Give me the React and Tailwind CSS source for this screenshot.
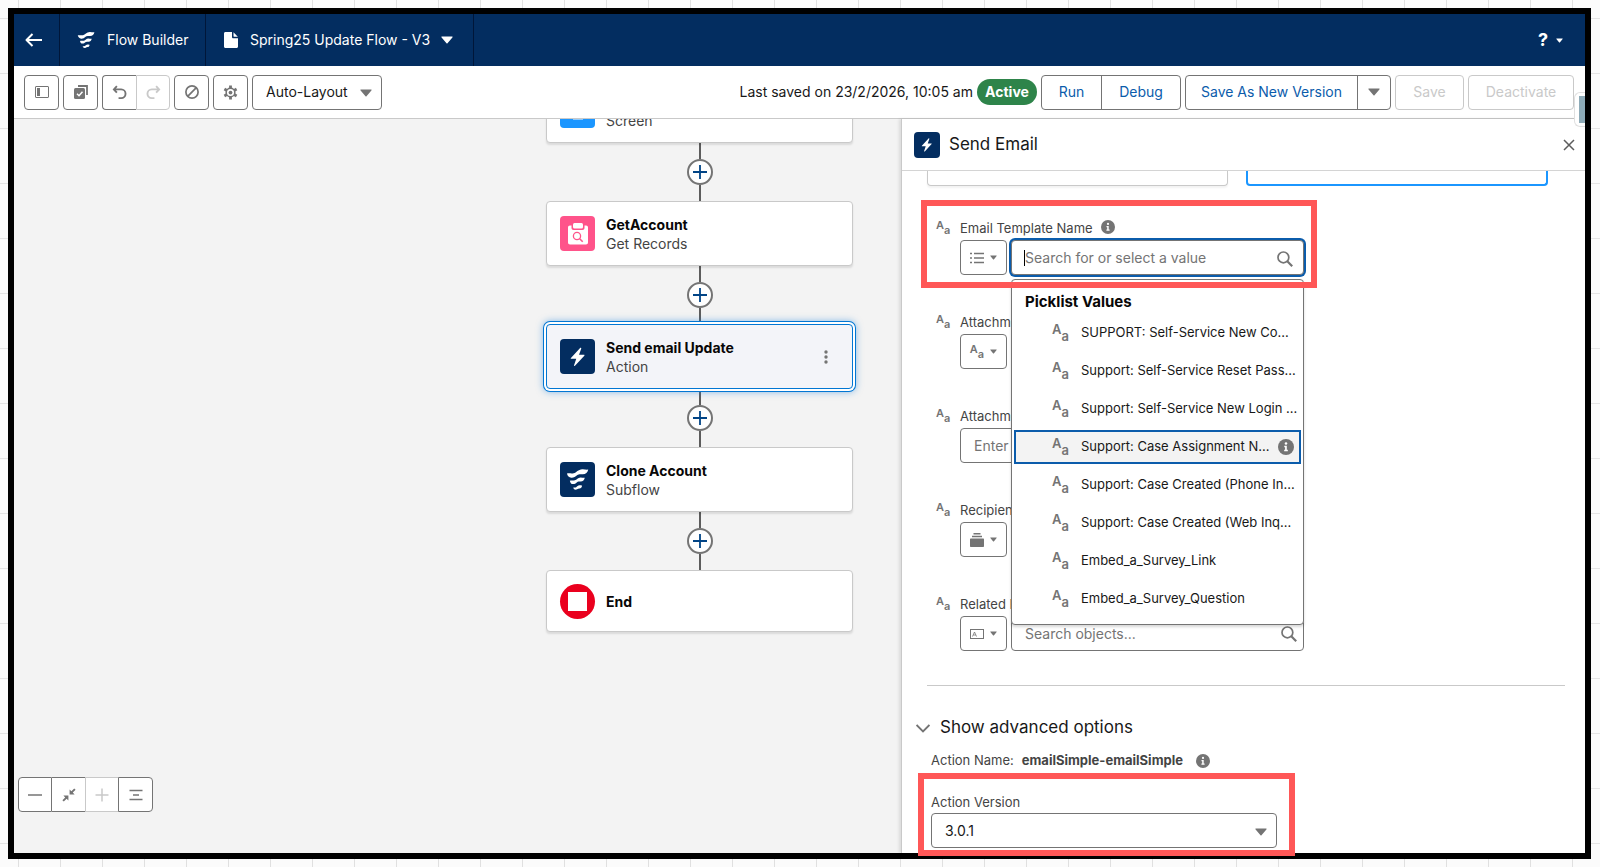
import React, { useState } from "react";
import clsx from "clsx";

/* ---------- Icons ---------- */

const Caret = ({ className }) => (
  <svg viewBox="0 0 12 8" className={className} fill="currentColor" aria-hidden="true">
    <path d="M1 0.500h10c.6 0 .8.6.4 1L6.500 7.300a.7.7 0 0 1-1 0L.6 1.500C.2 1.100.4.5 1 .5z" />
  </svg>
);

const FlowIcon = ({ className }) => (
  <svg viewBox="0 0 24 24" className={className} fill="currentColor" aria-hidden="true">
    <path d="M1 5.800c2.500-.6 4.300.2 7-.3C11 4.800 12.500 1.600 17 1.300c2.400-.1 4.200.7 6.200.3-.5 3-2.700 4.900-5.700 5-2.600.1-4-.4-6 1C9.500 9.200 8 10.400 5.500 10.200 3.200 10 1.500 8.300 1 5.800z" />
    <path d="M4 13.200c2-.4 3.300.2 5.200-.3 2.200-.6 3-2.900 6-3 1.600 0 2.900.6 4.400.3-.4 2.500-2 3.900-4.200 4-1.800.1-2.700-.2-4.200.9-1.300 1-2.300 1.800-4 1.700-1.700-.1-2.900-1.600-3.200-3.600z" />
    <path d="M7.600 20.400c1.200-.3 2 0 3-.4 1.200-.5 1.700-1.900 3.500-1.900 1.100 0 1.800.4 2.700.2-.2 1.900-1.300 3-2.700 3.100-1.100.1-1.700.4-2.500.9-1.700.9-3.700.200-4-1.900z" />
  </svg>
);

const BoltIcon = ({ className }) => (
  <svg viewBox="0 0 24 24" className={className} fill="currentColor" aria-hidden="true">
    <path d="M14.300 2.200 4.300 13c-.4.5-.2 1 .4 1h5.400L7.700 21c-.3.9.5 1.200 1 .6l10.200-11c.4-.5.1-1-.4-1h-5.400l2.400-6.700c.3-.9-.6-1.300-1.200-.7z" />
  </svg>
);

const SearchIcon = ({ className }) => (
  <svg viewBox="0 0 16 16" className={className} fill="none" stroke="currentColor" strokeWidth="1.700" aria-hidden="true">
    <circle cx="6.400" cy="6.400" r="5.400" />
    <path d="m10.300 10.300 4.900 4.900" strokeWidth="2.200" />
  </svg>
);

const InfoIcon = ({ className }) => (
  <svg viewBox="0 0 14 14" className={className} aria-hidden="true">
    <circle cx="7" cy="7" r="7" fill="#747474" />
    <circle cx="7" cy="3.900" r="1.100" fill="#fff" />
    <path d="M5.500 6h2.200v3.500h.9v1.200H5.400V9.500h.8V7.200h-.7z" fill="#fff" />
  </svg>
);

const TextType = ({ small }) => (
  <span
    className={clsx(
      "flex shrink-0 font-semibold text-[#747474]",
      small ? "h-[14px] text-[11px]" : "h-4 text-[13px]"
    )}
    aria-hidden="true"
  >
    <span className="self-start leading-[9px]">A</span>
    <span className={clsx("self-end", small ? "leading-[9px]" : "leading-[10px]")}>a</span>
  </span>
);

/* ---------- Header ---------- */

const Header = () => (
  <header className="flex h-[52px] shrink-0 items-stretch bg-[#032d60] text-sm text-white">
    <a href="#back" aria-label="Back" className="flex w-[46px] items-center border-r border-[#001639] pl-[11px]">
      <svg viewBox="0 0 17 14" className="h-[14px] w-[17px]" fill="none" stroke="currentColor" strokeWidth="2">
        <path d="M7.500 1 1.500 7l6 6M1.500 7H17" strokeLinejoin="round" />
      </svg>
    </a>
    <div className="flex items-center border-r border-[#001639] pr-4 pl-[17px]">
      <FlowIcon className="h-[18px] w-[18px]" />
      <span className="w-[94px] pl-3 whitespace-nowrap">Flow Builder</span>
    </div>
    <button className="flex items-center border-r border-[#001639] pr-5 pl-[18px]">
      <svg viewBox="0 0 14 16" className="h-4 w-[14px]" fill="currentColor">
        <path d="M1.500 0H8v5c0 .8.500 1.300 1.300 1.300H14v8.200c0 .8-.6 1.500-1.500 1.500h-11C.6 16 0 15.300 0 14.500v-13C0 .6.6 0 1.500 0z" />
        <path d="M9.500.2 13.800 4.800H10c-.3 0-.5-.2-.5-.5z" />
      </svg>
      <span className="pl-3 whitespace-nowrap">Spring25 Update Flow - V3</span>
      <Caret className="ml-[11px] h-2 w-3" />
    </button>
    <button aria-label="Help" className="ml-auto flex items-center gap-2 pr-[22px] text-lg font-bold">
      ?
      <Caret className="h-[5px] w-[7px]" />
    </button>
  </header>
);

/* ---------- Toolbar ---------- */

const ToolButton = ({ label, className, children, ...rest }) => (
  <button
    aria-label={label}
    className={clsx("flex h-[35px] items-center justify-center border bg-white", className)}
    {...rest}
  >
    {children}
  </button>
);

const enabled = "border-[#747474] text-[#747474]";
const disabledLook = "border-[#c9c9c9] text-[#c9c9c9]";

const UndoIcon = ({ className }) => (
  <svg viewBox="0 0 16 16" className={className} fill="none" stroke="currentColor" strokeWidth="2">
    <path d="M5.200 1.300 2 4.700l3.200 3.400M2.200 4.700h7.600a4.600 4.600 0 0 1 0 9.300H7" />
  </svg>
);

const Toolbar = () => {
  const [layout, setLayout] = useState("auto");

  return (
    <div className="flex h-[53px] shrink-0 items-center border-b border-[#c9c9c9] bg-white pr-[11px] pl-[10px] text-sm">
      <div className="flex gap-1">
        <ToolButton label="Toggle toolbox" className={clsx("w-[35px] rounded", enabled)}>
          <svg viewBox="0 0 14 12" className="h-3 w-[14px]" fill="none" stroke="currentColor">
            <rect x="0.500" y="0.500" width="13" height="11" rx="0.500" />
            <rect x="2" y="2" width="3" height="8" fill="currentColor" stroke="none" />
          </svg>
        </ToolButton>
        <ToolButton label="Select elements" className={clsx("w-[35px] rounded", enabled)}>
          <svg viewBox="0 0 14 14" className="h-[14px] w-[14px]">
            <path d="M4 1h9v9" fill="none" stroke="currentColor" strokeWidth="1.800" />
            <rect x="0" y="3" width="11" height="11" rx="1.500" fill="currentColor" />
            <path d="m3 8.700 2 2 3.500-4" fill="none" stroke="#fff" strokeWidth="1.500" />
          </svg>
        </ToolButton>
        <div className="flex">
          <ToolButton label="Undo" className={clsx("w-[34px] rounded-l border-r-0", enabled)}>
            <UndoIcon className="h-[15px] w-[15px]" />
          </ToolButton>
          <ToolButton label="Redo" disabled className={clsx("w-[34px] rounded-r", disabledLook)}>
            <UndoIcon className="h-[15px] w-[15px] -scale-x-100" />
          </ToolButton>
        </div>
        <ToolButton label="Disable" className={clsx("w-[35px] rounded", enabled)}>
          <svg viewBox="0 0 14 14" className="h-[14px] w-[14px]" fill="none" stroke="currentColor" strokeWidth="1.700">
            <circle cx="7" cy="7" r="6.100" />
            <path d="m2.700 11.300 8.600-8.600" />
          </svg>
        </ToolButton>
        <ToolButton label="Flow settings" className={clsx("w-[35px] rounded", enabled)}>
          <svg viewBox="0 0 16 16" className="h-[15px] w-[15px]" fill="none" stroke="currentColor">
            <path d="M8 .5v3M8 12.500v3M1.500 4.300l2.600 1.500M11.900 10.200l2.600 1.500M1.500 11.700l2.600-1.500M11.900 5.800l2.600-1.500" strokeWidth="3" />
            <circle cx="8" cy="8" r="4.600" strokeWidth="1.600" />
            <circle cx="8" cy="8" r="2" fill="currentColor" stroke="none" />
          </svg>
        </ToolButton>
        <div className="relative">
          <select
            aria-label="Layout mode"
            value={layout}
            onChange={(e) => setLayout(e.target.value)}
            className="h-[35px] w-[130px] appearance-none rounded border border-[#747474] bg-white pl-[13px] text-[#181818]"
          >
            <option value="auto">Auto-Layout</option>
            <option value="free">Free-Form</option>
          </select>
          <Caret className="pointer-events-none absolute top-[14px] right-[10px] h-2 w-3 text-[#747474]" />
        </div>
      </div>

      <div className="ml-auto flex items-center gap-1 text-[#0b5cab]">
        <span className="whitespace-nowrap text-[#181818]">Last saved on 23/2/2026, 10:05 am</span>
        <span className="flex h-[26px] w-[60px] items-center justify-center rounded-full bg-[#2e844a] font-bold text-white">
          Active
        </span>
        <div className="flex h-[35px] rounded border border-[#747474]">
          <button className="w-[60px] border-r border-[#747474]">Run</button>
          <button className="w-[78px]">Debug</button>
        </div>
        <div className="flex h-[35px] rounded border border-[#747474]">
          <button className="w-[172px] border-r border-[#747474] whitespace-nowrap">Save As New Version</button>
          <button aria-label="More save options" className="flex w-8 items-center justify-center text-[#747474]">
            <Caret className="h-2 w-3" />
          </button>
        </div>
        <button disabled className="h-[35px] w-[69px] rounded border border-[#c9c9c9] text-[#c9c9c9]">
          Save
        </button>
        <button disabled className="h-[35px] w-[106px] rounded border border-[#c9c9c9] text-[#c9c9c9]">
          Deactivate
        </button>
      </div>
    </div>
  );
};

/* ---------- Canvas ---------- */

const Node = ({ title, type, icon, selected, end }) => (
  <div
    className={clsx(
      "relative flex w-[307px] items-center rounded border pl-[13px]",
      end ? "h-[62px]" : "h-[65px]",
      selected
        ? "border-[#0176d3] bg-[#f3f4f9] shadow-[0_0_0_2px_#fff,0_0_0_3px_#0176d3,0_0_7px_3px_#1b7fdc80]"
        : "border-[#c9c9c9] bg-white shadow-[0_2px_2px_#0000001a]"
    )}
  >
    {icon}
    <div className="ml-[11px] text-sm leading-[19px] text-[#444]">
      <div className="font-bold text-[#080707]">{title}</div>
      {type && <div>{type}</div>}
    </div>
    {selected && (
      <button aria-label="Element actions" className="mr-6 ml-auto text-[#747474]">
        <svg viewBox="0 0 4 14" className="h-[14px] w-1" fill="currentColor">
          <circle cx="2" cy="2" r="1.700" />
          <circle cx="2" cy="7" r="1.700" />
          <circle cx="2" cy="12" r="1.700" />
        </svg>
      </button>
    )}
  </div>
);

const Connector = () => (
  <div className="flex h-[58px] flex-col items-center">
    <div className="w-[2px] flex-1 bg-[#5c5c5c]" />
    <button
      aria-label="Add element"
      className="flex h-[26px] w-[26px] items-center justify-center rounded-full border-2 border-[#747474] bg-white text-[#014486]"
    >
      <svg viewBox="0 0 14 14" className="h-[14px] w-[14px]" stroke="currentColor" strokeWidth="1.800">
        <path d="M7 0v14M0 7h14" />
      </svg>
    </button>
    <div className="w-[2px] flex-1 bg-[#5c5c5c]" />
  </div>
);

const iconTile = "flex h-[35px] w-[35px] shrink-0 items-center justify-center rounded text-white";

const Canvas = () => (
  <main className="relative min-w-0 flex-1 overflow-hidden bg-[#f3f3f3] pl-[532px]">
    <div className="-mt-[41px] flex w-[307px] flex-col items-center">
      <Node
        title="Welcome"
        type="Screen"
        icon={
          <div className={clsx(iconTile, "bg-[#1b96ff]")}>
            <svg viewBox="0 0 22 22" className="h-[22px] w-[22px]" fill="currentColor">
              <rect x="1" y="1" width="20" height="13" rx="1.500" />
              <path d="M9 14h4v3h3v2.500H6V17h3z" />
            </svg>
          </div>
        }
      />
      <Connector />
      <Node
        title="GetAccount"
        type="Get Records"
        icon={
          <div className={clsx(iconTile, "bg-[#ff538a]")}>
            <svg viewBox="0 0 22 24" className="h-6 w-[22px]" fill="currentColor">
              <rect x="6" y="1" width="10" height="5.500" rx="1.500" />
              <path d="M3 3.500h1.500V6c0 1.300.8 2 2 2h9c1.200 0 2-.7 2-2V3.500H19c1.200 0 2 .8 2 2v15c0 1.200-.8 2-2 2H3c-1.200 0-2-.8-2-2v-15c0-1.200.8-2 2-2z" />
              <circle cx="10" cy="14" r="3.600" fill="none" stroke="#ff538a" strokeWidth="1.300" />
              <path d="m12.700 16.700 3 3" stroke="#ff538a" strokeWidth="1.600" />
            </svg>
          </div>
        }
      />
      <Connector />
      <Node
        selected
        title="Send email Update"
        type="Action"
        icon={
          <div className={clsx(iconTile, "bg-[#032d60]")}>
            <BoltIcon className="h-[22px] w-[22px]" />
          </div>
        }
      />
      <Connector />
      <Node
        title="Clone Account"
        type="Subflow"
        icon={
          <div className={clsx(iconTile, "bg-[#032d60]")}>
            <FlowIcon className="h-[23px] w-[23px]" />
          </div>
        }
      />
      <Connector />
      <Node
        end
        title="End"
        icon={
          <div className="flex h-[35px] w-[35px] shrink-0 items-center justify-center rounded-full bg-[#ea001e]">
            <div className="h-[19px] w-[19px] bg-white" />
          </div>
        }
      />
    </div>

    {/* Zoom controls */}
    <div className="absolute bottom-[41px] left-1 flex">
      <ToolButton label="Zoom out" className={clsx("w-[34px] rounded-l", enabled)}>
        <svg viewBox="0 0 14 14" className="h-[14px] w-[14px]" stroke="currentColor" strokeWidth="1.500">
          <path d="M0 7h14" />
        </svg>
      </ToolButton>
      <ToolButton label="Zoom to fit" className={clsx("w-[33px] border-x-0", enabled)}>
        <svg viewBox="0 0 14 14" className="h-[14px] w-[14px]" fill="currentColor">
          <path d="M7.600 1.400v5h5L10.800 4.600 13.600 1.800 12.200.4 9.400 3.200z" />
          <path d="M6.400 12.600v-5h-5l1.800 1.800L.4 12.200l1.400 1.400 2.800-2.800z" />
        </svg>
      </ToolButton>
      <ToolButton label="Zoom in" disabled className={clsx("w-[33px] border-r-0", disabledLook)}>
        <svg viewBox="0 0 14 14" className="h-[14px] w-[14px]" stroke="currentColor" strokeWidth="1.500">
          <path d="M0.500 7h13M7 .5v13" />
        </svg>
      </ToolButton>
      <ToolButton label="Align" className={clsx("w-[35px] rounded-r", enabled)}>
        <svg viewBox="0 0 14 14" className="h-[14px] w-[14px]" stroke="currentColor" strokeWidth="1.700">
          <path d="M.5 2.500h13M4 7h6M.5 11.500h13" />
        </svg>
      </ToolButton>
    </div>
  </main>
);

/* ---------- Side panel ---------- */

const picklist = [
  "SUPPORT: Self-Service New Co...",
  "Support: Self-Service Reset Pass...",
  "Support: Self-Service New Login ...",
  "Support: Case Assignment N...",
  "Support: Case Created (Phone In...",
  "Support: Case Created (Web Inq...",
  "Embed_a_Survey_Link",
  "Embed_a_Survey_Question",
];

const Field = ({ id, label, info, children }) => (
  <div className="flex">
    <div className="w-6 shrink-0 pt-px">
      <TextType small />
    </div>
    <div className="w-[344px]">
      <label htmlFor={id} className="flex h-4 items-center text-[13px] leading-4 whitespace-nowrap text-[#444]">
        {label}
        {info && <InfoIcon className="mb-[2px] ml-2 h-[14px] w-[14px]" />}
      </label>
      <div className="mt-1 flex gap-1">{children}</div>
    </div>
  </div>
);

const TypeButton = ({ label, children }) => (
  <button
    aria-label={label}
    className="flex h-[35px] w-[47px] shrink-0 items-center justify-center gap-[6px] rounded border border-[#747474] bg-white text-[#747474]"
  >
    {children}
    <Caret className="h-[5px] w-[7px]" />
  </button>
);

const inputClass =
  "h-[35px] w-full min-w-0 rounded border border-[#747474] bg-white pl-[13px] text-sm text-[#181818] placeholder:text-[#747474] outline-none";

const TemplateMenu = () => {
  const [active, setActive] = useState(3);

  return (
    <div className="absolute top-[39px] left-0 z-10 w-full rounded border border-[#747474] bg-white px-[2px] pt-[11px] pb-2 shadow-[0_2px_3px_#00000029]">
      <h3 className="pl-[11px] text-[15px] leading-[22px] font-bold text-[#080707]">Picklist Values</h3>
      <ul role="listbox" aria-label="Picklist Values" className="mt-[3px] flex flex-col gap-1">
        {picklist.map((name, i) => (
          <li
            key={name}
            role="option"
            aria-selected={i === active}
            onMouseEnter={() => setActive(i)}
            className={clsx(
              "flex h-[34px] cursor-pointer items-center border-2 pl-9 text-[13px] whitespace-nowrap text-[#181818]",
              i === active ? "border-[#0b5cab] bg-[#f3f3f3]" : "border-transparent"
            )}
          >
            <TextType />
            <span className="ml-3">{name}</span>
            {i === active && <InfoIcon className="mr-[5px] ml-auto h-4 w-4" />}
          </li>
        ))}
      </ul>
    </div>
  );
};

const Panel = () => {
  const [open, setOpen] = useState(true);

  return (
    <aside className="relative flex w-[684px] shrink-0 flex-col border-l border-[#c9c9c9] bg-white shadow-[-2px_0_3px_#0000001a]">
      <div className="flex h-[52px] shrink-0 items-center border-b border-[#d4d4d4] pr-[10px] pl-3">
        <div className="flex h-[26px] w-[26px] items-center justify-center rounded bg-[#032d60] text-white">
          <BoltIcon className="h-4 w-4" />
        </div>
        <h2 className="ml-[9px] pt-px text-[17px] text-[#181818]">Send Email</h2>
        <button aria-label="Close" className="ml-auto text-[#5c5c5c]">
          <svg viewBox="0 0 12 12" className="h-3 w-3" stroke="currentColor" strokeWidth="1.500">
            <path d="m1 1 10 10M11 1 1 11" />
          </svg>
        </button>
      </div>

      <div className="pl-[25px]">
        {/* Bottom edge of the scrolled option cards */}
        <div className="flex h-[15px] gap-[18px] pr-[37px]">
          <div className="flex-1 rounded-b border border-t-0 border-[#c9c9c9] shadow-[0_2px_2px_#0000000d]" />
          <div className="flex-1 rounded-b border-2 border-t-0 border-[#1b96ff]" />
        </div>

        <div className="mt-[34px] flex flex-col gap-[39px] pl-[9px]">
          <div className="relative">
            <Field id="template" label="Email Template Name" info>
              <TypeButton label="Template type">
                <svg viewBox="0 0 14 12" className="h-3 w-[14px]" stroke="currentColor" strokeWidth="1.700">
                  <path d="M4 1.500h10M4 6h10M4 10.500h10M0 1.500h2M0 6h2M0 10.500h2" />
                </svg>
              </TypeButton>
              <div className="relative flex-1">
                <input
                  id="template"
                  type="text"
                  placeholder="Search for or select a value"
                  className={clsx(inputClass, "ring-2 ring-[#0b5cab]")}
                />
                <span className="absolute top-[10px] left-[13px] h-4 w-px bg-black" />
                <SearchIcon className="absolute top-[11px] right-[11px] h-4 w-4 text-[#747474]" />
                <TemplateMenu />
              </div>
            </Field>
            <div className="pointer-events-none absolute -top-5 -left-[15px] z-20 h-[88px] w-[396px] border-[6px] border-[#ff5757]" />
          </div>

          <Field id="attachment" label="Attachment ID">
            <TypeButton label="Attachment type">
              <TextType small />
            </TypeButton>
            <input id="attachment" type="text" className={inputClass} />
          </Field>

          <Field id="attachment-name" label="Attachment Name">
            <input id="attachment-name" type="text" placeholder="Enter value" className={inputClass} />
          </Field>

          <Field id="recipients" label="Recipient List">
            <TypeButton label="Recipient type">
              <svg viewBox="0 0 14 14" className="h-[14px] w-[14px]" fill="currentColor">
                <path d="M3.500 0h7v1.500h-7zM2 2.800h10v1.500H2z" />
                <path d="M1 5.500h12c.6 0 1 .4 1 1V13c0 .6-.4 1-1 1H1c-.6 0-1-.4-1-1V6.500c0-.6.400-1 1-1z" />
              </svg>
            </TypeButton>
            <input id="recipients" type="text" className={inputClass} />
          </Field>

          <Field id="related" label="Related Record ID">
            <TypeButton label="Record type">
              <svg viewBox="0 0 14 10" className="h-[10px] w-[14px]" fill="none" stroke="currentColor">
                <rect x="0.500" y="0.500" width="13" height="9" />
                <path d="m2.500 7.500 2-4.500 2 4.500M3.300 6h2.400" strokeWidth="0.800" />
              </svg>
            </TypeButton>
            <div className="relative flex-1">
              <input id="related" type="text" placeholder="Search objects..." className={inputClass} />
              <SearchIcon className="absolute top-[10px] right-[7px] h-4 w-4 text-[#747474]" />
            </div>
          </Field>
        </div>

        <hr className="mt-[34px] mr-5 border-[#c9c9c9]" />
      </div>

      {/* ---------- Advanced options ---------- */}
      <div className="px-[14px]">
        <button
          aria-expanded={open}
          onClick={() => setOpen(!open)}
          className="mt-[30px] flex h-6 items-center gap-[10px] text-[17px] text-[#181818]"
        >
          <svg viewBox="0 0 14 9" className="h-[9px] w-[14px] text-[#747474]" fill="none" stroke="currentColor" strokeWidth="1.800">
            <path d="m.6 1 6.400 6.500L13.400 1" />
          </svg>
          Show advanced options
        </button>
        {open && (
          <div className="pl-[15px] text-[13px] text-[#444]">
            <p className="mt-[11px] flex h-5 items-center">
              Action Name:
              <strong className="ml-2">emailSimple-emailSimple</strong>
              <InfoIcon className="ml-[13px] h-[14px] w-[14px]" />
            </p>
            <div className="relative mt-[23px] w-[346px]">
              <label htmlFor="version" className="block leading-4">
                Action Version
              </label>
              <select
                id="version"
                className="mt-[3px] block h-[35px] w-full appearance-none rounded border border-[#747474] bg-white pl-[13px] text-sm text-[#181818]"
              >
                <option>3.0.1</option>
              </select>
              <Caret className="pointer-events-none absolute right-[10px] bottom-3 h-2 w-3 text-[#747474]" />
              <div className="pointer-events-none absolute -top-[21px] -left-[13px] h-[83px] w-[377px] border-[6px] border-[#ff5757]" />
            </div>
          </div>
        )}
      </div>
    </aside>
  );
};

export default function App() {
  return (
    <div className="h-screen bg-[#fbfbfb] bg-[linear-gradient(90deg,#e0e0e0_1px,transparent_1px),linear-gradient(#e4e4e4_1px,transparent_1px)] bg-[size:42px_55px] bg-[position:18px_18px] p-2 pr-[9px] font-[Inter,'Liberation_Sans',sans-serif]">
      <div className="relative flex h-full flex-col border-[6px] border-black bg-white">
        <Header />
        <Toolbar />
        <div className="flex min-h-0 flex-1">
          <Canvas />
          <Panel />
        </div>
        {/* Docked widget tab */}
        <div className="absolute top-[78px] right-0 z-30 flex h-[35px] w-[11px] items-center justify-end rounded-l-md border border-r-0 border-[#e0e0e0] bg-white">
          <div className="h-[27px] w-[6px] bg-[#8eabb8]" />
        </div>
      </div>
    </div>
  );
}
